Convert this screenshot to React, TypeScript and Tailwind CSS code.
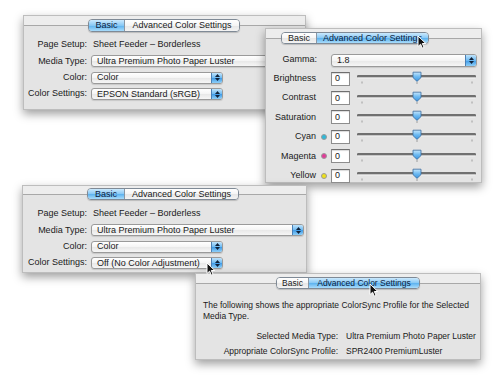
import React from "react";

function Cursor({ cls }: { cls: string }) {
  return (
    <svg className={`absolute z-50 ${cls}`} width="10" height="14" viewBox="0 0 10 14">
      <path
        d="M1 1 L1 11.5 L3.6 9.2 L5.4 13.2 L7.1 12.4 L5.3 8.5 L8.8 8.5 Z"
        fill="#111"
        stroke="#fff"
        strokeWidth="1"
        strokeLinejoin="round"
      />
    </svg>
  );
}

function Stepper() {
  return (
    <div className="flex h-full w-[11px] flex-col items-center justify-center gap-[1px] border-l border-[#4a7fb5] bg-[linear-gradient(#bfe3fb,#6cb9f1_50%,#3f9ae6_52%,#8ecff8)]">
      <svg width="5" height="3" viewBox="0 0 5 3">
        <path d="M2.5 0 L5 3 L0 3 Z" fill="#10223a" />
      </svg>
      <svg width="5" height="3" viewBox="0 0 5 3">
        <path d="M0 0 L5 0 L2.5 3 Z" fill="#10223a" />
      </svg>
    </div>
  );
}

function Popup({ text, cls }: { text: string; cls: string }) {
  return (
    <div
      className={`flex items-center overflow-hidden rounded-[3px] border border-[#9a9a9a] bg-[linear-gradient(#ffffff,#f4f4f4_50%,#e8e8e8_52%,#f6f6f6)] shadow-[0_1px_1px_rgba(0,0,0,0.12)] ${cls}`}
    >
      <span className="flex-1 truncate whitespace-nowrap pl-[5px] leading-none">{text}</span>
      <Stepper />
    </div>
  );
}

function Tabs({
  selected,
  basicW,
  advW,
  h,
}: {
  selected: "basic" | "adv";
  basicW: string;
  advW: string;
  h: string;
}) {
  const on =
    "bg-[linear-gradient(#cbe9fd,#87c8f5_50%,#5cb2ef_52%,#a9dcfb)] text-[#0d2240]";
  const off =
    "bg-[linear-gradient(#ffffff,#f5f5f5_50%,#e6e6e6_52%,#f4f4f4)] text-[#1a1a1a]";
  return (
    <div
      className={`flex overflow-hidden whitespace-nowrap rounded-[4px] border border-[#7f8a96] shadow-[0_1px_1px_rgba(0,0,0,0.18)] ${h}`}
    >
      <div className={`flex items-center justify-center leading-none ${basicW} ${selected === "basic" ? on : off}`}>
        Basic
      </div>
      <div className="w-px bg-[#8a96a3]" />
      <div className={`flex items-center justify-center leading-none ${advW} ${selected === "adv" ? on : off}`}>
        Advanced Color Settings
      </div>
    </div>
  );
}

function Header({
  leftW,
  pt,
  children,
}: {
  leftW: string;
  pt: string;
  children: React.ReactNode;
}) {
  return (
    <div className={`flex items-center bg-[linear-gradient(#ededed_58%,#e4e4e4_58%)] ${pt}`}>
      <div className={`h-px bg-[#a8a8a8] ${leftW}`} />
      {children}
      <div className="h-px flex-1 bg-[#a8a8a8]" />
    </div>
  );
}

function Panel({ cls, children }: { cls: string; children: React.ReactNode }) {
  return (
    <div
      className={`absolute flex flex-col whitespace-nowrap border border-[#bdbdbd] bg-[#e4e4e4] shadow-[0_4px_9px_rgba(0,0,0,0.38)] ${cls}`}
    >
      {children}
    </div>
  );
}

function LeftRow({
  label,
  labelW,
  h,
  children,
}: {
  label: string;
  labelW: string;
  h: string;
  children: React.ReactNode;
}) {
  return (
    <div className={`flex items-center gap-[4px] ${h}`}>
      <div className={`text-right ${labelW}`}>{label}</div>
      {children}
    </div>
  );
}

function Slider() {
  return (
    <svg width="119" height="19" viewBox="0 0 119 19">
      <rect x="0" y="6" width="119" height="2.6" rx="1.2" fill="#707070" />
      <rect x="0.5" y="8.6" width="118" height="0.8" fill="#f4f4f4" />
      <line x1="5" y1="12.5" x2="5" y2="14.5" stroke="#8a8a8a" strokeWidth="0.8" />
      <line x1="60" y1="13" x2="60" y2="15" stroke="#8a8a8a" strokeWidth="0.8" />
      <line x1="115" y1="12.5" x2="115" y2="14.5" stroke="#8a8a8a" strokeWidth="0.8" />
      <defs>
        <linearGradient id="thumb" x1="0" y1="0" x2="0" y2="1">
          <stop offset="0" stopColor="#c4e6fd" />
          <stop offset="0.5" stopColor="#6cb9f1" />
          <stop offset="1" stopColor="#3a93de" />
        </linearGradient>
      </defs>
      <path
        d="M56 3.2 L64 3.2 L64 8.6 L60 12.4 L56 8.6 Z"
        fill="url(#thumb)"
        stroke="#3b6c9f"
        strokeWidth="0.8"
        strokeLinejoin="round"
      />
    </svg>
  );
}

function Input() {
  return (
    <div className="flex h-[14px] w-[19px] items-center border border-[#8d8d8d] border-t-[#6e6e6e] bg-white pl-[3px] leading-none shadow-[inset_0_1px_1px_rgba(0,0,0,0.15)]">
      0
    </div>
  );
}

function SlideRow({ label, dot }: { label: string; dot?: string }) {
  return (
    <div className="flex h-[19.4px] items-center">
      <div className="w-[50px] text-right">{label}</div>
      <div className="flex w-[15px] items-center justify-center">
        {dot && <div className={`h-[6px] w-[6px] rounded-full border-[0.5px] border-[#9a9a9a] ${dot}`} />}
      </div>
      <Input />
      <div className="ml-[7px] flex items-center">
        <Slider />
      </div>
    </div>
  );
}

export default function App() {
  return (
    <div className="relative h-[378px] w-[500px] overflow-hidden bg-white font-['Liberation_Sans',Arial,sans-serif] text-[9px] text-[#1a1a1a]">
      {/* Panel 1 */}
      <Panel cls="left-[23px] top-[15px] z-10 h-[95px] w-[283px]">
        <Header leftW="w-[64px]" pt="pt-[3px]">
          <Tabs selected="basic" basicW="w-[35px]" advW="w-[114px]" h="h-[13px]" />
        </Header>
        <div className="flex flex-col pt-[5px]">
          <LeftRow label="Page Setup:" labelW="w-[63px]" h="h-[16.3px]">
            <span className="pl-[2px]">Sheet Feeder – Borderless</span>
          </LeftRow>
          <LeftRow label="Media Type:" labelW="w-[63px]" h="h-[16.3px]">
            <Popup text="Ultra Premium Photo Paper Luster" cls="h-[12px] w-[214px]" />
          </LeftRow>
          <LeftRow label="Color:" labelW="w-[63px]" h="h-[16.3px]">
            <Popup text="Color" cls="h-[12px] w-[132px]" />
          </LeftRow>
          <LeftRow label="Color Settings:" labelW="w-[63px]" h="h-[16.3px]">
            <Popup text="EPSON Standard (sRGB)" cls="h-[12px] w-[132px]" />
          </LeftRow>
        </div>
      </Panel>

      {/* Panel 2 */}
      <Panel cls="left-[265px] top-[28px] z-20 h-[155px] w-[217px]">
        <Header leftW="w-[15px]" pt="pt-[3px]">
          <Tabs selected="adv" basicW="w-[34px]" advW="w-[111px]" h="h-[12px]" />
        </Header>
        <div className="flex flex-col pt-[7px]">
          <div className="flex h-[18px] items-center">
            <div className="w-[51px] text-right">Gamma:</div>
            <div className="w-[14px]" />
            <Popup text="1.8" cls="h-[13px] w-[146px]" />
          </div>
          <SlideRow label="Brightness" />
          <SlideRow label="Contrast" />
          <SlideRow label="Saturation" />
          <SlideRow label="Cyan" dot="bg-[#2fb8d8]" />
          <SlideRow label="Magenta" dot="bg-[#e23a98]" />
          <SlideRow label="Yellow" dot="bg-[#eee11a]" />
        </div>
      </Panel>

      {/* Panel 3 */}
      <Panel cls="left-[22px] top-[185px] z-30 h-[88px] w-[285px]">
        <Header leftW="w-[64px]" pt="pt-[2px]">
          <Tabs selected="basic" basicW="w-[36px]" advW="w-[113px]" h="h-[12px]" />
        </Header>
        <div className="flex flex-col pt-[6px]">
          <LeftRow label="Page Setup:" labelW="w-[64px]" h="h-[16.3px]">
            <span className="pl-[2px]">Sheet Feeder – Borderless</span>
          </LeftRow>
          <LeftRow label="Media Type:" labelW="w-[64px]" h="h-[16.3px]">
            <Popup text="Ultra Premium Photo Paper Luster" cls="h-[12px] w-[213px]" />
          </LeftRow>
          <LeftRow label="Color:" labelW="w-[64px]" h="h-[16.3px]">
            <Popup text="Color" cls="h-[12px] w-[132px]" />
          </LeftRow>
          <LeftRow label="Color Settings:" labelW="w-[64px]" h="h-[16.3px]">
            <Popup text="Off (No Color Adjustment)" cls="h-[12px] w-[132px]" />
          </LeftRow>
        </div>
      </Panel>

      {/* Panel 4 */}
      <Panel cls="left-[195px] top-[273px] z-40 h-[87px] w-[286px] text-[8.5px]">
        <Header leftW="w-[80px]" pt="pt-[3px]">
          <Tabs selected="adv" basicW="w-[31px]" advW="w-[110px]" h="h-[12px]" />
        </Header>
        <div className="flex flex-col px-[7px] pt-[11px]">
          <p className="leading-[10.5px]">
            The following shows the appropriate ColorSync Profile for the Selected
            <br />
            Media Type.
          </p>
          <div className="mt-[8px] flex h-[15px] items-center gap-[8px]">
            <div className="w-[135px] shrink-0 text-right">Selected Media Type:</div>
            <div className="whitespace-nowrap">Ultra Premium Photo Paper Luster</div>
          </div>
          <div className="flex h-[15px] items-center gap-[8px]">
            <div className="w-[135px] shrink-0 text-right">Appropriate ColorSync Profile:</div>
            <div className="whitespace-nowrap">SPR2400 PremiumLuster</div>
          </div>
        </div>
      </Panel>

      <Cursor cls="left-[417px] top-[35px]" />
      <Cursor cls="left-[206px] top-[262px]" />
      <Cursor cls="left-[369px] top-[283px]" />
    </div>
  );
}
